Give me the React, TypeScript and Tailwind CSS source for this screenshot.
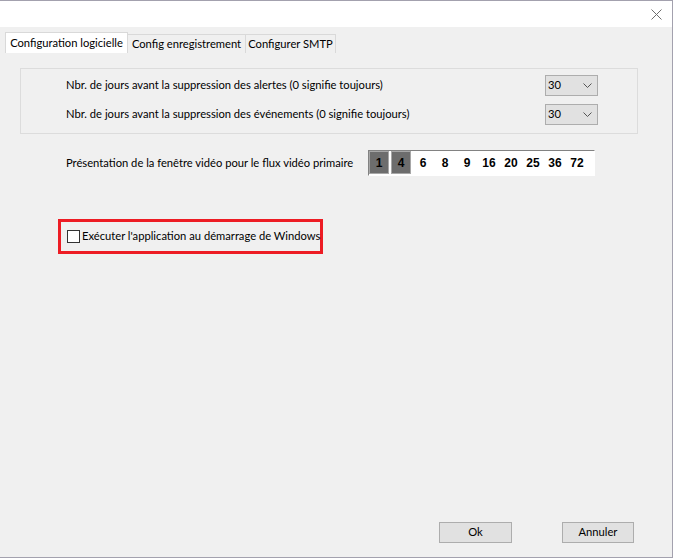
import { useState } from 'react';

const font = { fontFamily: 'Lato, "Liberation Sans", sans-serif' };

const Dropdown = ({ value }: { value: string }) => (
  <div className="flex h-[21px] w-[53px] items-center justify-between border border-[#adadad] bg-[#e1e1e1] pl-[2px] pr-[5px] text-[11.2px] text-black">
    <span>{value}</span>
    <svg width="9" height="5" viewBox="0 0 9 5" className="text-[#555]">
      <polyline points="0.5,0.5 4.5,4.5 8.5,0.5" fill="none" stroke="currentColor" strokeWidth="1" />
    </svg>
  </div>
);

const App = () => {
  const [runAtStartup, setRunAtStartup] = useState(false);
  const layouts = ['1', '4', '6', '8', '9', '16', '20', '25', '36', '72'];
  const active = ['1', '4'];

  return (
    <div className="h-[558px] w-[674px] whitespace-nowrap bg-white" style={font}>
      <div className="flex h-[558px] w-[673px] flex-col border-y border-r border-[#a3a1ae]">
        {/* title bar */}
        <div className="flex h-[26px] shrink-0 items-start justify-end bg-white pr-[10px] pt-[8px]">
          <svg width="11" height="11" viewBox="0 0 11 11">
            <path d="M0.5 0.5 L10.5 10.5 M10.5 0.5 L0.5 10.5" stroke="#6e6e6e" strokeWidth="1" />
          </svg>
        </div>

        <div className="flex flex-1 flex-col bg-[#f0f0f0]">
          {/* tabs */}
          <div className="ml-[5px] mt-[5px] flex items-end text-[11.2px] text-black">
            <div className="flex h-[21px] w-[123px] items-center justify-center border-x border-t border-[#d9d9d9] bg-white">
              Configuration logicielle
            </div>
            <div className="flex h-[19px] w-[118px] items-center justify-center border-r border-t border-[#d9d9d9] bg-[#f0f0f0]">
              Config enregistrement
            </div>
            <div className="flex h-[19px] w-[90px] items-center justify-center border-r border-t border-[#d9d9d9] bg-[#f0f0f0]">
              Configurer SMTP
            </div>
          </div>

          {/* group box */}
          <div className="ml-[20px] mt-[15px] flex h-[66px] w-[618px] flex-col gap-[8px] border border-[#dcdcdc] pt-[6px] text-[11.2px] text-black">
            <div className="flex items-center">
              <span className="ml-[45px] w-[479px]">Nbr. de jours avant la suppression des alertes (0 signifie toujours)</span>
              <Dropdown value="30" />
            </div>
            <div className="flex items-center">
              <span className="ml-[45px] w-[479px]">Nbr. de jours avant la suppression des événements (0 signifie toujours)</span>
              <Dropdown value="30" />
            </div>
          </div>

          {/* video layout */}
          <div className="mt-[16px] flex items-center text-[11.2px] text-black">
            <span className="ml-[66px] w-[302px]">Présentation de la fenêtre vidéo pour le flux vidéo primaire</span>
            <div className="flex h-[26px] w-[227px] items-start gap-[2px] border border-b-white border-l-[#828282] border-r-white border-t-[#828282] bg-white">
              {layouts.map((n) => (
                <div
                  key={n}
                  className={
                    active.includes(n)
                      ? 'flex h-[23px] w-[20px] items-center justify-center border border-[#a7a7a7] bg-[#6d6d6d]'
                      : 'flex h-[23px] w-[20px] items-center justify-center'
                  }
                >
                  <span
                    className="text-[12px] font-bold text-black"
                    style={{ fontFamily: '"Liberation Sans", Arial, sans-serif' }}
                  >
                    {n}
                  </span>
                </div>
              ))}
            </div>
          </div>

          {/* startup option */}
          <div className="ml-[58px] mt-[43px] flex h-[35px] w-[265px] items-center border-[3px] border-[#ed1c24] pl-[6px] text-[11.2px] text-black">
            <button
              type="button"
              onClick={() => setRunAtStartup(!runAtStartup)}
              className="flex h-[13px] w-[13px] shrink-0 items-center justify-center border border-[#333] bg-white"
            >
              {runAtStartup && (
                <svg width="9" height="9" viewBox="0 0 9 9">
                  <polyline points="1,4.5 3.5,7 8,1.5" fill="none" stroke="#000" strokeWidth="1.3" />
                </svg>
              )}
            </button>
            <span className="ml-[2px]">Exécuter l'application au démarrage de Windows</span>
          </div>

          <div className="flex-1" />

          {/* footer buttons */}
          <div className="flex justify-end gap-[50px] pb-[14px] pr-[38px] text-[11.2px] text-black">
            <button type="button" className="h-[21px] w-[73px] border border-[#adadad] bg-[#e1e1e1]">
              Ok
            </button>
            <button type="button" className="h-[21px] w-[72px] border border-[#adadad] bg-[#e1e1e1]">
              Annuler
            </button>
          </div>
        </div>
      </div>
    </div>
  );
};

export default App;
